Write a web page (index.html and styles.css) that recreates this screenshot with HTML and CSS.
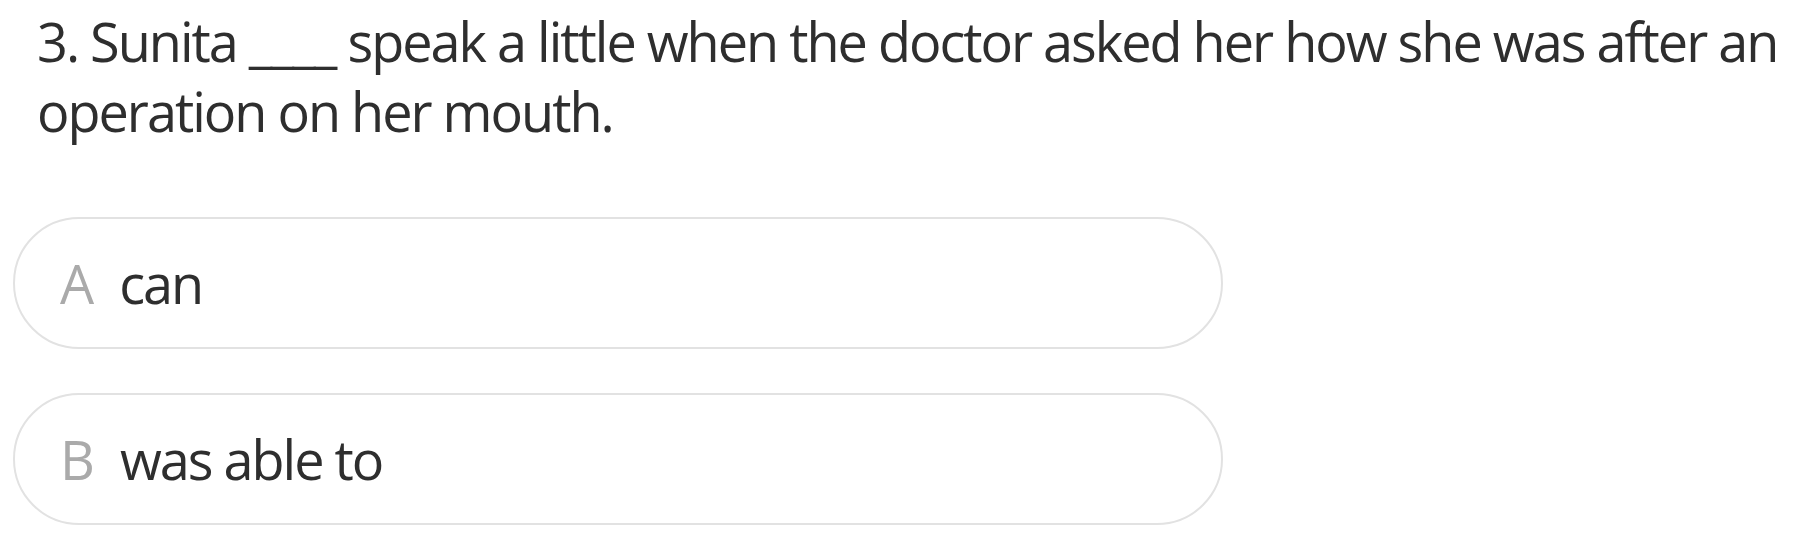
FILE: index.html
```html
<!DOCTYPE html>
<html lang="en">
<head>
<meta charset="utf-8">
<title>Question 3</title>
<link rel="stylesheet" href="styles.css">
</head>
<body>
<div class="quiz">
  <p class="question">3. Sunita ____ speak a little when the doctor asked her how she was after an operation on her mouth.</p>
  <div class="options">
    <div class="option"><span class="letter">A</span><span class="text">can</span></div>
    <div class="option"><span class="letter">B</span><span class="text">was able to</span></div>
  </div>
</div>
</body>
</html>
```
FILE: styles.css
```css
html, body {
  margin: 0;
  padding: 0;
  background: #ffffff;
}
body {
  font-family: "Open Sans", "Noto Sans", "Liberation Sans", sans-serif;
  color: #2e2e2e;
}
.quiz {
  padding: 6px 0 0 13px;
}
.question {
  margin: 0 0 71px 24px;
  max-width: 1760px;
  font-size: 54px;
  line-height: 70px;
  letter-spacing: -2px;
}
.options {
  display: flex;
  flex-direction: column;
  gap: 44px;
}
.option {
  width: 1210px;
  height: 132px;
  box-sizing: border-box;
  border: 2px solid #e2e2e2;
  border-radius: 66px;
  display: flex;
  align-items: center;
  padding-left: 45px;
  font-size: 54px;
  line-height: 70px;
  letter-spacing: -2px;
}
.letter {
  color: #aaaaaa;
  margin-right: 27px;
}
.text {
  color: #2e2e2e;
}
```
